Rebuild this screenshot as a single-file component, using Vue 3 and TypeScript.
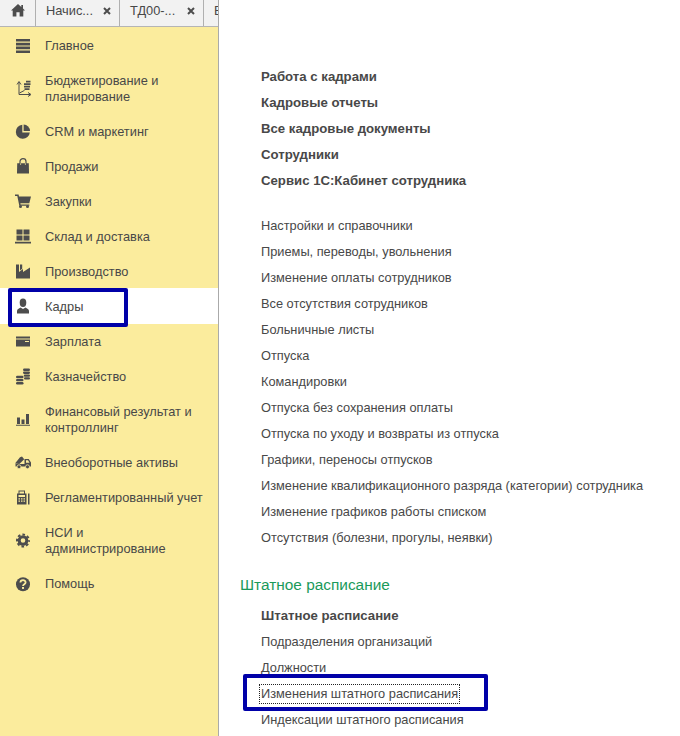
<template>
  <div class="page">
    <aside class="side">
      <div class="tabs">
        <div class="home">
          <svg width="14" height="13" viewBox="0 0 14 13"><path d="M7 0 L10.300 3 V1 H12 V4.500 L14 6.500 H12.300 V12.500 H8.600 V8.300 H5.400 V12.500 H1.700 V6.500 H0 Z" fill="#4d4d4d" /></svg>
        </div>
        <div class="tab">
          <span class="tab-text">Начис...</span>
          <svg class="close" width="8" height="8" viewBox="0 0 8 8"><path d="M1 1L7 7M7 1L1 7" stroke="#4d4d4d" stroke-width="2" /></svg>
        </div>
        <div class="tab">
          <span class="tab-text">ТД00-...</span>
          <svg class="close" width="8" height="8" viewBox="0 0 8 8"><path d="M1 1L7 7M7 1L1 7" stroke="#4d4d4d" stroke-width="2" /></svg>
        </div>
        <div class="tab tab-cut"><span class="tab-text">В</span></div>
      </div>
      <ul class="menu">
        <li v-for="item in menu" :key="item.label" class="item" :class="{ active: item.active, tall: item.tall }">
          <span class="icon">
            <svg width="18" height="18" viewBox="0 0 18 18" v-html="item.icon"></svg>
          </span>
          <span class="label">{{ item.label }}</span>
        </li>
      </ul>
      <div class="mark mark-side"></div>
    </aside>
    <main class="content">
      <ul class="bold-list">
        <li v-for="t in boldLinks" :key="t">{{ t }}</li>
      </ul>
      <ul class="links">
        <li v-for="t in links" :key="t">{{ t }}</li>
      </ul>
      <h2 class="group">Штатное расписание</h2>
      <ul class="links staff">
        <li class="strong">Штатное расписание</li>
        <li>Подразделения организаций</li>
        <li>Должности</li>
        <li class="focused"><span class="focus">Изменения штатного расписания</span><span class="mark mark-link"></span></li>
        <li>Индексации штатного расписания</li>
      </ul>
    </main>
  </div>
</template>

<script setup lang="ts">
interface MenuItem {
  label: string;
  icon: string;
  active?: boolean;
  tall?: boolean;
}

const menu: MenuItem[] = [
  { label: 'Главное', icon: '<path d="M2 2h14v2.600H2zM2 5.800h14v2.600H2zM2 9.600h14v2.600H2zM2 13.400h14V16H2z" fill="#4d4d4d"/>' },
  {
    label: 'Бюджетирование и\nпланирование',
    tall: true,
    icon: '<path d="M5 2v12.500h11" fill="none" stroke="#4d4d4d"/><path d="M3 4.500L5 1.500l2 3M14 12.500l3 2-3 2" fill="none" stroke="#4d4d4d"/><path d="M5.500 13l5-2.600" fill="none" stroke="#4d4d4d"/><path d="M12 .8h4.500v1.700H12zM10 3.300h6.500V5H10zM10 5.800h6V7.500h-6zM10.500 8.300h5V10h-5z" fill="#4d4d4d"/>',
  },
  { label: 'CRM и маркетинг', icon: '<path d="M8.300 1.800a7 7 0 1 0 7.500 7.600H8.300z" fill="#4d4d4d"/><path d="M9.600 1.500a6.500 6.500 0 0 1 6.400 6.500H9.600z" fill="#4d4d4d"/>' },
  { label: 'Продажи', icon: '<path d="M3.200 5.200h11.600L15 15.500H3z" fill="#4d4d4d"/><path d="M6 7V3.500a3 2.800 0 0 1 6 0V7" fill="none" stroke="#4d4d4d" stroke-width="1.200"/><path d="M6.600 5.200V7M11.400 5.200V7" stroke="#fbec9d" stroke-width=".7"/>' },
  { label: 'Закупки', icon: '<path d="M1 1.500h3.600l.4 2H17l-1.700 6.700H6.400l.2 1.200h8.700v1.300H5.300L3.300 3H1z" fill="#4d4d4d"/><circle cx="6.500" cy="13.400" r="1.500" fill="#4d4d4d"/><circle cx="13.500" cy="13.400" r="1.500" fill="#4d4d4d"/>' },
  { label: 'Склад и доставка', icon: '<path d="M2.500 1.500h6v5h-6zM9.500 1.500h6v5h-6zM2.500 7.500h6v5h-6zM9.500 7.500h6v5h-6zM1 13.700h16v1.800H1z" fill="#4d4d4d"/>' },
  { label: 'Производство', icon: '<path d="M2 15.500V1.500h3V9l4-3v3l7-4.500v11z" fill="#4d4d4d"/><path d="M6 1.500h2.200v4.300L6 7.400z" fill="#4d4d4d"/>' },
  { label: 'Кадры', active: true, icon: '<ellipse cx="9" cy="4.700" rx="3.300" ry="4.200" fill="#4d4d4d"/><path d="M3 15.500V13c0-2 2-2.500 3.500-3.500L9 11l2.500-1.500c1.500 1 3.500 1.500 3.500 3.500v2.500z" fill="#4d4d4d"/>' },
  { label: 'Зарплата', icon: '<path fill-rule="evenodd" d="M2 3.500h14v2H2zM2 6.500h14v7H2zM11 8v1h4V8z" fill="#4d4d4d"/>' },
  { label: 'Казначейство', icon: '<g fill="#4d4d4d"><rect x="9" y=".5" width="7" height="2.500" rx="1.200"/><rect x="9" y="3.600" width="7" height="2.300" rx="1.100"/><rect x="9.800" y="6.500" width="6.200" height="2.300" rx="1.100"/><rect x="10" y="9.300" width="6" height="2.200" rx="1.100"/><rect x="2" y="7.800" width="7.500" height="2.500" rx="1.200"/><rect x="2" y="10.900" width="7.500" height="2.400" rx="1.200"/><rect x="2" y="14" width="7.500" height="2.400" rx="1.200"/></g>' },
  { label: 'Финансовый результат и\nконтроллинг', tall: true, icon: '<path d="M3 6.500h3V13H3zM7.500 8.500h3V13h-3zM12 3h3v10h-3zM2 13.700h14v1H2z" fill="#4d4d4d"/>' },
  { label: 'Внеоборотные активы', icon: '<g fill="#4d4d4d"><path d="M1 9.500L6 3.200l2-.7 2.200 2.800-4.800 4.800z"/><path fill-rule="evenodd" d="M10.500 5h4.200L17 8.500v4H1.500V10h9zM12 6.300v2.400h3.500L14 6.300z"/></g><g fill="#4d4d4d" stroke="#fbec9d" stroke-width=".8"><circle cx="5" cy="12.800" r="2"/><circle cx="13.500" cy="12.800" r="2"/></g>' },
  { label: 'Регламентированный учет', icon: '<path fill-rule="evenodd" d="M4.500 1.500h6.500v3h-1V2.500H5.500v2h-1zM3 4.500h9.500v11H3zM4.500 6v2H11V6zM4.500 9.300v1.200h1.500V9.300zM7 9.300v1.200h1.500V9.300zM9.500 9.300v1.200H11V9.300zM4.500 11.500v1.200h1.500v-1.200zM7 11.500v1.200h1.500v-1.200zM9.500 11.500v1.200H11v-1.200z" fill="#4d4d4d"/><path d="M14 4.500h1.500v11H14z" fill="#4d4d4d"/>' },
  { label: 'НСИ и\nадминистрирование', tall: true, icon: '<circle cx="9" cy="8.500" r="3.800" fill="none" stroke="#4d4d4d" stroke-width="3"/><circle cx="9" cy="8.500" r="6" fill="none" stroke="#4d4d4d" stroke-width="2" stroke-dasharray="2.600 2.112" stroke-dashoffset="1.300"/>' },
  { label: 'Помощь', icon: '<circle cx="9" cy="9.200" r="7" fill="#4d4d4d"/><path d="M6.400 7.600c0-3.200 5.200-3.200 5.200-.2 0 1.800-2.600 1.800-2.600 3.600" fill="none" stroke="#fbec9d" stroke-width="1.800"/><rect x="8" y="12" width="2" height="1.900" fill="#fbec9d"/>' },
];

const boldLinks = [
  'Работа с кадрами',
  'Кадровые отчеты',
  'Все кадровые документы',
  'Сотрудники',
  'Сервис 1С:Кабинет сотрудника',
];

const links = [
  'Настройки и справочники',
  'Приемы, переводы, увольнения',
  'Изменение оплаты сотрудников',
  'Все отсутствия сотрудников',
  'Больничные листы',
  'Отпуска',
  'Командировки',
  'Отпуска без сохранения оплаты',
  'Отпуска по уходу и возвраты из отпуска',
  'Графики, переносы отпусков',
  'Изменение квалификационного разряда (категории) сотрудника',
  'Изменение графиков работы списком',
  'Отсутствия (болезни, прогулы, неявки)',
];
</script>

<style>
html, body {
  margin: 0;
  background: #fff;
  overflow: hidden;
}
</style>

<style scoped>
.page {
  display: flex;
  width: 680px;
  height: 736px;
  overflow: hidden;
  font-family: "Liberation Sans", Arial, sans-serif;
  font-size: 12.8px;
  color: #484848;
}

ul {
  list-style: none;
  margin: 0;
  padding: 0;
}

.side {
  position: relative;
  width: 218px;
  flex: none;
  background: #fbec9d;
  border-right: 1px solid #aaa;
}

.tabs {
  display: flex;
  height: 26px;
  background: #f2f2f2;
  border-bottom: 1px solid #b5b5b5;
  overflow: hidden;
}

.home {
  width: 35px;
  flex: none;
  display: flex;
  align-items: center;
  justify-content: center;
  padding-bottom: 5px;
  border-right: 1px solid #b0b0b0;
}

.tab {
  width: 84px;
  flex: none;
  display: flex;
  align-items: center;
  box-sizing: border-box;
  padding: 0 8px 5px 10px;
  border-right: 1px solid #b0b0b0;
}

.tab-cut {
  width: 20px;
  border-right: 0;
}

.tab-text {
  flex: 1;
  white-space: nowrap;
}

.close {
  flex: none;
}

.menu {
  padding-top: 1px;
}

.item {
  display: flex;
  align-items: center;
  height: 35px;
  padding-left: 14px;
}

.item.tall {
  height: 51px;
}

.item.active {
  background: #fff;
  height: 36px;
  margin-top: -1px;
  padding-top: 1px;
  box-sizing: border-box;
}

.icon {
  width: 31px;
  flex: none;
  display: flex;
}

.label {
  width: 170px;
  line-height: 16px;
  white-space: pre-line;
}

.mark {
  position: absolute;
  box-sizing: border-box;
  border: 4px solid #0000a8;
  border-radius: 2px;
}

.mark-side {
  left: 8px;
  top: 288px;
  width: 120px;
  height: 39px;
}

.content {
  flex: 1;
  padding: 64px 0 0 21px;
  min-width: 0;
}

.bold-list {
  padding-left: 21px;
  margin-bottom: 19px;
}

.bold-list li,
.links .strong {
  font-weight: bold;
  font-size: 13.2px;
}

.bold-list li,
.links li {
  height: 26px;
  line-height: 26px;
  white-space: nowrap;
}

.links {
  padding-left: 21px;
}

.group {
  margin: 22px 0 0;
  font-size: 15.4px;
  font-weight: normal;
  line-height: 24px;
  color: #1a9a5a;
}

.staff {
  margin-top: 6px;
}

.links .focused {
  position: relative;
}

.focus {
  outline: 1px dotted #222;
  padding: 0 1px;
  margin-left: -1px;
  display: inline-block;
  line-height: 18px;
}

.mark-link {
  left: -18px;
  top: -7px;
  width: 245px;
  height: 37px;
}
</style>
